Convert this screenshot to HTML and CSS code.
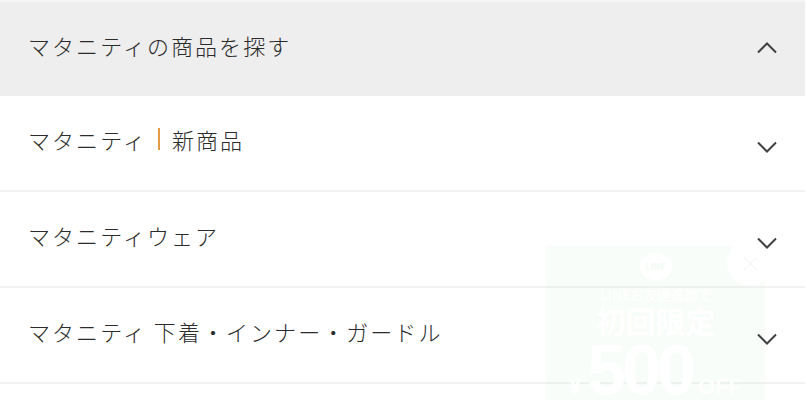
FILE: index.html
```html
<!DOCTYPE html>
<html lang="ja">
<head>
<meta charset="utf-8">
<title>マタニティの商品を探す</title>
<link rel="stylesheet" href="styles.css">
</head>
<body>
<div class="page">
  <ul class="accordion">
    <li class="row open"><span class="label">マタニティの商品を探す</span>
      <svg class="chev" viewBox="0 0 20 12"><path d="M1 10.5 10 1.5 19 10.5"/></svg></li>
    <li class="row"><span class="label">マタニティ<i class="sep"></i>新商品</span>
      <svg class="chev low" viewBox="0 0 20 12"><path d="M1 1.5 10 10.5 19 1.5"/></svg></li>
    <li class="row"><span class="label">マタニティウェア</span>
      <svg class="chev low" viewBox="0 0 20 12"><path d="M1 1.5 10 10.5 19 1.5"/></svg></li>
    <li class="row"><span class="label">マタニティ 下着・インナー・ガードル</span>
      <svg class="chev low" viewBox="0 0 20 12"><path d="M1 1.5 10 10.5 19 1.5"/></svg></li>
  </ul>
  <aside class="promo">
    <div class="line-logo">LINE</div>
    <div class="promo-sub">LINEお友達追加で</div>
    <div class="promo-main">初回限定</div>
    <div class="promo-price"><span class="yen">¥</span><span class="num">500</span><span class="off">OFF</span></div>
  </aside>
  <div class="close"><svg viewBox="0 0 16 16"><path d="M1 1 15 15M15 1 1 15"/></svg></div>
</div>
</body>
</html>
```

FILE: styles.css
```css
* { box-sizing: border-box; }
html, body { margin: 0; padding: 0; height: 400px; overflow: hidden; background: #fff; }
.page { position: relative; width: 807px; height: 400px; overflow: hidden; padding-right: 2px; }
.accordion { list-style: none; margin: 0; padding: 0; border-top: 2px solid #f5f5f5; }
.row {
  height: 96px;
  padding: 0 29px 4px 28px;
  display: flex;
  align-items: center;
  justify-content: space-between;
  border-bottom: 2px solid #f2f2f2;
  background: #fff;
  font-family: "Noto Sans CJK JP", "Noto Sans", sans-serif;
  font-weight: 300;
  font-size: 22px;
  letter-spacing: 2.05px;
  color: #2b2b2b;
}
.row.open { height: 94px; background: #eee; border-bottom: 0; padding-bottom: 2px; }
.label { display: flex; align-items: center; white-space: pre; margin-bottom: 4px; }
.open .label { margin-bottom: 6px; }
.sep { display: block; width: 2px; height: 22px; background: #e39a45; margin: 0 12px 0 11px; }
.chev { position: relative; z-index: 2; width: 20px; height: 12px; margin-right: -1px; fill: none; stroke: #404040; stroke-width: 2; flex: none; }
.chev.low { margin-top: 12px; }
.promo {
  position: absolute;
  left: 546px;
  top: 246px;
  width: 219px;
  height: 154px;
  background: rgba(222, 245, 226, .2);
  color: #fff;
  font-family: "Noto Sans CJK JP", sans-serif;
  font-weight: 700;
  display: flex;
  flex-direction: column;
  align-items: center;
}
.line-logo {
  position: relative;
  flex: none;
  width: 32px; height: 27px; margin-top: 7px; border-radius: 50%;
  background: #fff; color: #f2faf3; font-size: 9px; line-height: 27px; text-align: center;
}
.line-logo::after {
  content: "";
  position: absolute;
  left: 13px;
  top: 25px;
  border-style: solid;
  border-width: 5px 3px 0 3px;
  border-color: #fff transparent transparent transparent;
}
.promo-sub { flex: none; font-size: 13.5px; line-height: 14px; margin-top: 7px; white-space: nowrap; }
.promo-main { flex: none; font-size: 30px; line-height: 32px; margin-top: 3px; }
.promo-price { flex: none; display: flex; align-items: baseline; font-family: "Liberation Sans", sans-serif; margin-top: 6px; white-space: nowrap; height: 56px; line-height: 56px; }
.num { font-size: 70px; letter-spacing: -4px; margin-left: 6px; }
.yen { font-size: 22px; }
.off { font-size: 22px; margin-left: 6px; }
.close {
  position: absolute;
  left: 727px;
  top: 240px;
  width: 46px;
  height: 46px;
  border-radius: 50%;
  background: #fff;
  display: flex;
  align-items: center;
  justify-content: center;
}
.close svg { width: 15px; height: 15px; fill: none; stroke: #f0f0f0; stroke-width: 1; }
```
